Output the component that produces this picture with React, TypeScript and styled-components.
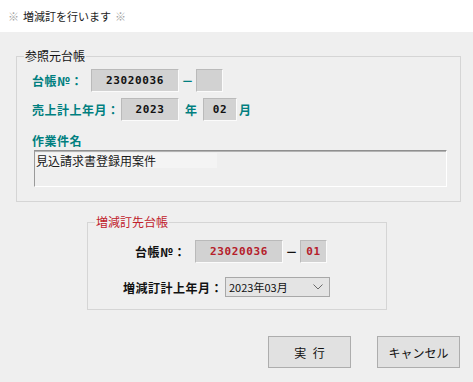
import React from "react";
import styled, { createGlobalStyle } from "styled-components";

const GlobalStyle = createGlobalStyle`
  html, body {
    margin: 0;
    padding: 0;
    background: #efefef;
  }
  body {
    font-family: "Noto Sans CJK JP", "Noto Sans", sans-serif;
    font-size: 12px;
    color: #1a1a1a;
  }
`;

const Dialog = styled.div`
  width: 473px;
  height: 382px;
  background: #efefef;
  display: flex;
  flex-direction: column;
  overflow: hidden;
`;

const TitleBar = styled.div`
  height: 32px;
  flex: none;
  background: #ffffff;
  display: flex;
  align-items: center;
  gap: 4px;
  padding-left: 8px;
  font-size: 11px;
  color: #222;
`;

const Mark = styled.span`
  color: #a3a3a3;
`;

const Body = styled.div`
  flex: 1;
  display: flex;
  flex-direction: column;
  padding: 16px 12px 0 16px;
`;

const Group = styled.fieldset<{ $pt: number; $pb: number; $ml?: number; $mt?: number; $w?: number }>`
  margin: ${(p) => p.$mt ?? 0}px 0 0 ${(p) => p.$ml ?? 0}px;
  ${(p) => (p.$w ? `width: ${p.$w}px;` : "")}
  box-sizing: border-box;
  min-width: 0;
  border: 1px solid #d5d5d5;
  padding: ${(p) => p.$pt}px 13px ${(p) => p.$pb}px 7px;
`;

const Legend = styled.legend<{ $red?: boolean }>`
  padding: 0 1px;
  font-size: 12px;
  line-height: 16px;
  color: ${(p) => (p.$red ? "#c0202a" : "#111")};
`;

const Row = styled.div<{ $indent: number; $mt?: number; $h?: number }>`
  display: flex;
  align-items: center;
  height: ${(p) => p.$h ?? 23}px;
  margin-left: ${(p) => p.$indent}px;
  margin-top: ${(p) => p.$mt ?? 0}px;
`;

const Label = styled.span<{ $w: number; $dark?: boolean }>`
  width: ${(p) => p.$w}px;
  flex: none;
  font-size: 12px;
  font-weight: 700;
  letter-spacing: 0.5px;
  white-space: nowrap;
  color: ${(p) => (p.$dark ? "#111" : "#007f7f")};
`;

const Field = styled.div<{ $w: number; $red?: boolean }>`
  width: ${(p) => p.$w}px;
  height: 23px;
  flex: none;
  box-sizing: border-box;
  display: flex;
  align-items: center;
  justify-content: center;
  background: #d2d2d2;
  border: 1px solid;
  border-color: #bababa #fbfbfb #fbfbfb #bababa;
  font-family: "DejaVu Sans Mono", "Liberation Mono", monospace;
  font-weight: 700;
  font-size: 11px;
  letter-spacing: 0.6px;
  color: ${(p) => (p.$red ? "#b5202a" : "#111")};
`;

const Unit = styled.span<{ $w: number; $dark?: boolean }>`
  width: ${(p) => p.$w}px;
  flex: none;
  text-align: center;
  font-size: 12px;
  font-weight: 700;
  color: ${(p) => (p.$dark ? "#111" : "#007f7f")};
`;

const SubLabel = styled.div`
  margin: 12px 0 0 8px;
  height: 16px;
  line-height: 16px;
  font-size: 12px;
  font-weight: 700;
  letter-spacing: 0.5px;
  color: #007f7f;
`;

const Memo = styled.div`
  margin: 1px 0 0 10px;
  height: 37px;
  box-sizing: border-box;
  border: 1px solid;
  border-color: #8f8f8f #ffffff #ffffff #9a9a9a;
  box-shadow: inset 0 1px 0 #b3b3b3;
  padding: 2px 0 0 1px;
  font-size: 12px;
  line-height: 15px;
  color: #1a1a1a;
`;

const MemoText = styled.span`
  display: inline-block;
  width: 181px;
  background: #f4f4f4;
`;

const Select = styled.div`
  width: 105px;
  height: 20px;
  flex: none;
  box-sizing: border-box;
  display: flex;
  align-items: center;
  justify-content: space-between;
  padding: 0 6px 0 3px;
  background: #e4e4e4;
  border: 1px solid #a8a8a8;
  font-size: 11px;
  color: #111;
`;

const Buttons = styled.div`
  display: flex;
  justify-content: flex-end;
  gap: 26px;
  margin: 26px 1px 0 0;
`;

const Button = styled.button<{ $spread?: boolean }>`
  width: 83px;
  height: 32px;
  box-sizing: border-box;
  background: #e1e1e1;
  border: 1px solid #adadad;
  font-family: "Noto Sans CJK JP", "Noto Sans", sans-serif;
  font-size: 12px;
  color: #111;
  padding: 0;
  word-spacing: ${(p) => (p.$spread ? "4px" : "0")};
`;

export default function App() {
  return (
    <>
      <GlobalStyle />
      <Dialog>
        <TitleBar>
          <Mark>※</Mark>
          <span>増減訂を行います</span>
          <Mark>※</Mark>
        </TitleBar>
        <Body>
          <Group $pt={5} $pb={14}>
            <Legend>参照元台帳</Legend>
            <Row $indent={8}>
              <Label $w={59}>台帳№：</Label>
              <Field $w={88}>23020036</Field>
              <Unit $w={17}>－</Unit>
              <Field $w={27} />
            </Row>
            <Row $indent={8} $mt={6}>
              <Label $w={89}>売上計上年月：</Label>
              <Field $w={58}>2023</Field>
              <Unit $w={24}>年</Unit>
              <Field $w={34}>02</Field>
              <Unit $w={16}>月</Unit>
            </Row>
            <SubLabel>作業件名</SubLabel>
            <Memo>
              <MemoText>見込請求書登録用案件</MemoText>
            </Memo>
          </Group>

          <Group $pt={10} $pb={12} $ml={71} $mt={12} $w={300}>
            <Legend $red>増減訂先台帳</Legend>
            <Row $indent={40}>
              <Label $w={60} $dark>台帳№：</Label>
              <Field $w={88} $red>23020036</Field>
              <Unit $w={17} $dark>－</Unit>
              <Field $w={27} $red>01</Field>
            </Row>
            <Row $indent={28} $mt={14} $h={20}>
              <Label $w={102} $dark>増減訂計上年月：</Label>
              <Select>
                <span>2023年03月</span>
                <svg width="10" height="6" viewBox="0 0 10 6">
                  <path d="M0.5 0.5 L5 5 L9.5 0.5" fill="none" stroke="#6a6a6a" strokeWidth="1" />
                </svg>
              </Select>
            </Row>
          </Group>

          <Buttons>
            <Button $spread>実 行</Button>
            <Button>キャンセル</Button>
          </Buttons>
        </Body>
      </Dialog>
    </>
  );
}
